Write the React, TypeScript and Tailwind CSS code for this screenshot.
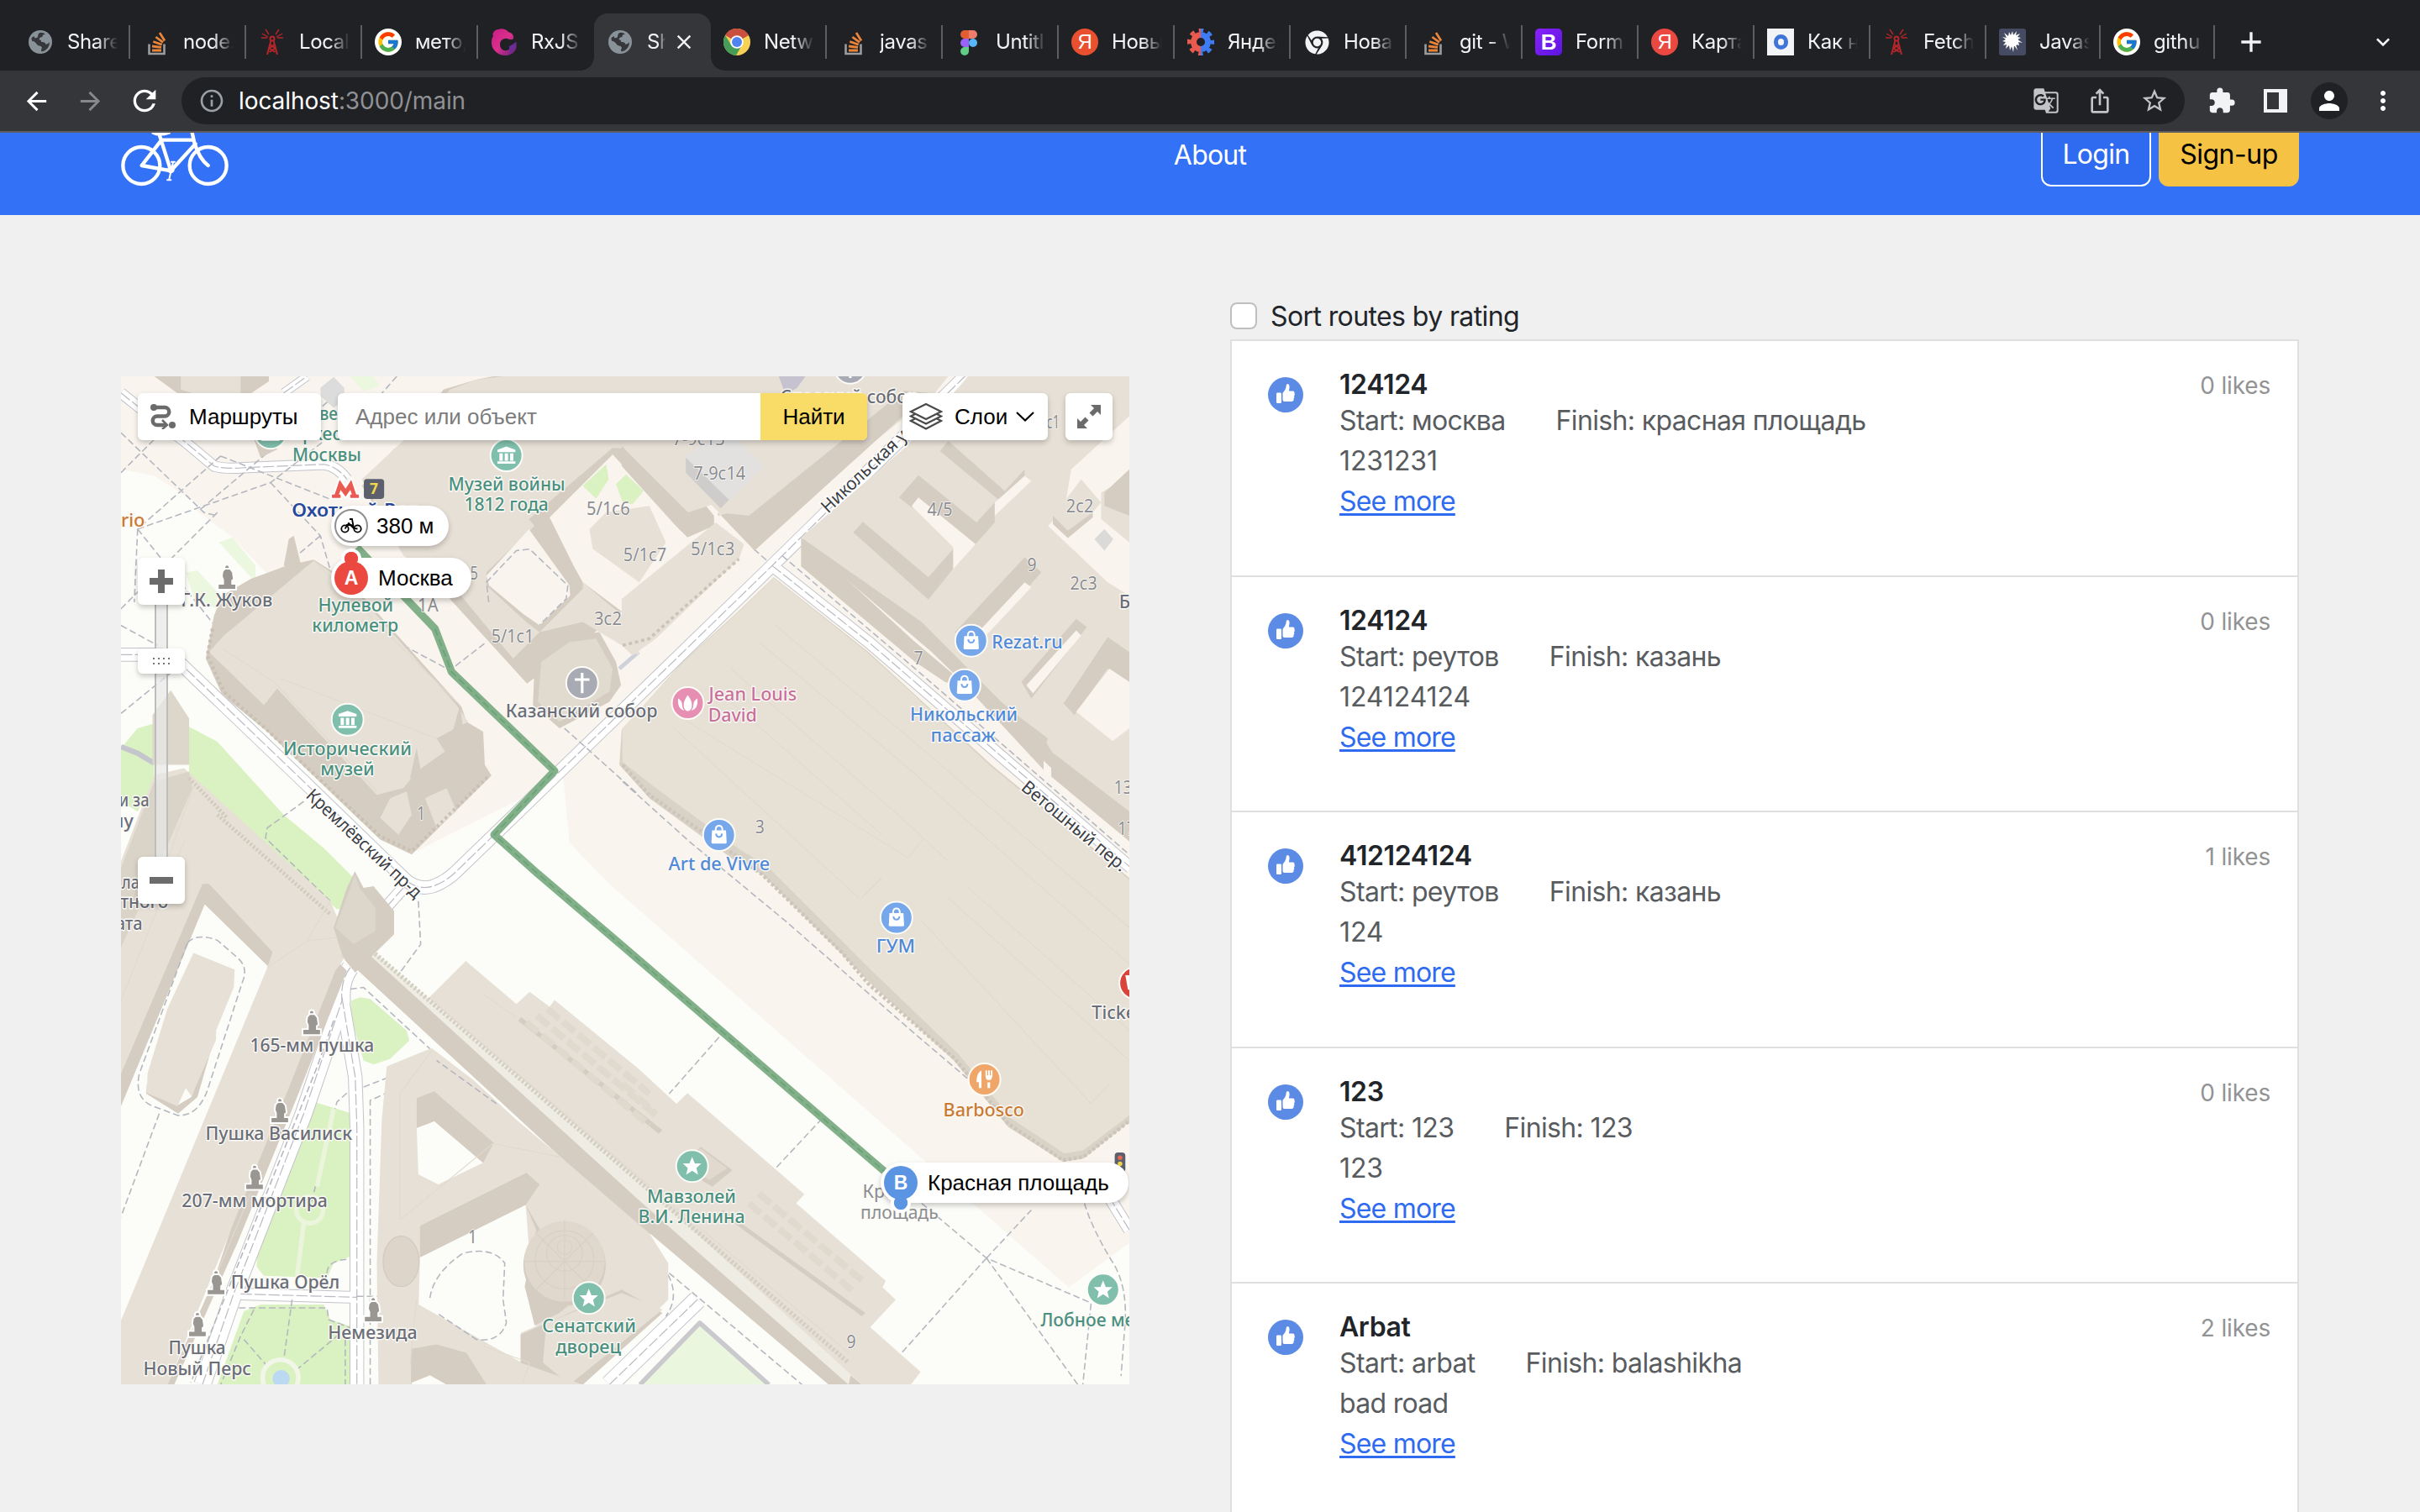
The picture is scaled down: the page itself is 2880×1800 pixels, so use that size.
import React from "react";
import {
  MdArrowBack, MdArrowForward, MdRefresh, MdInfoOutline, MdGTranslate, MdIosShare, MdStarBorder,
  MdExtension, MdPerson, MdMoreVert, MdClose, MdAdd, MdExpandMore,
} from "react-icons/md";
import { FaChrome } from "react-icons/fa";
import { FcGoogle } from "react-icons/fc";

/* ---------- favicons ---------- */

const Globe = () => (
  <svg viewBox="0 0 28 28" className="size-7">
    <circle cx="14" cy="14" r="14" fill="#8a9299" />
    <path
      d="M13 3Q17 2 20 4.500 16 5 16.500 8 13 8 12.500 11 16 12 15 14 20 13.500 20.500 17 24 16 25 14 25 23 16 25.500 14 24 16 21 15.500 18.500 11 18 9 15 6 13 3.500 14 3.500 9 8 5.500 7 9 9 10 11 8 10.500 5 13 3z"
      fill="#35373b"
    />
  </svg>
);

const Stack = () => (
  <svg viewBox="0 0 32 32" className="size-8">
    <path d="M7.500 18.500v11.500h18V18.500" fill="none" stroke="#9a9da0" strokeWidth="2.600" />
    <g stroke="#e8853b" strokeWidth="2.800">
      <path d="M11 26h11M11 21l11 1.400M12.300 15.500l10.400 3.600M15.400 10l8.600 6.400M20 5l6 9.600" />
    </g>
  </svg>
);

const Tower = () => (
  <svg viewBox="0 0 32 32" className="size-8" fill="none" stroke="#b3262a" strokeWidth="2">
    <circle cx="16" cy="12" r="2.500" />
    <path d="M14.500 14 10 31M17.500 14 22 31M13.500 19l6 4.500-7 4.500M18.500 19l-6 4.500 7 4.500" />
    <path d="M8 1l4 6M4 6l7 4M3 11h7M24 1l-4 6M28 6l-7 4M29 11h-7" strokeWidth="1.400" />
  </svg>
);

const GoogleMark = () => (
  <span className="flex size-8 items-center justify-center rounded-full bg-white">
    <FcGoogle className="size-[28px]" />
  </span>
);

const Rx = () => (
  <svg viewBox="0 0 32 32" className="size-8">
    <defs>
      <linearGradient id="rx" x1="0" y1="0" x2="1" y2="1">
        <stop offset="0" stopColor="#c81c86" />
        <stop offset=".5" stopColor="#dd2f8c" />
        <stop offset="1" stopColor="#57207f" />
      </linearGradient>
    </defs>
    <path
      d="M9 1C13-1 19 1 21 4c4 1 7 4 6 8-2 2-5 1-7 0-5-1-9 2-9 7 0 5 4 8 8 7 5-1 8-4 10-10 4 6 0 14-9 16C10 33 1 26 1 17c0-3 0-5 2-8-2-3 2-8 6-8z"
      fill="url(#rx)"
    />
    <path d="M22 21l9-5-2 8-7 5z" fill="#6a2c96" />
  </svg>
);

const ChromeColor = () => (
  <svg viewBox="0 0 32 32" className="size-8">
    <circle cx="16" cy="16" r="16" fill="#f7d154" />
    <path d="M16 16 2.100 8A16 16 0 0 1 29.900 8z" fill="#c9503f" />
    <path d="M2.100 8A16 16 0 0 0 15 32L22 19.500 9.500 20z" fill="#469d58" />
    <circle cx="16" cy="16" r="7.800" fill="#fff" />
    <circle cx="16" cy="16" r="6" fill="#4f83ee" />
  </svg>
);

const Figma = () => (
  <svg viewBox="0 0 32 32" className="size-8">
    <path d="M16 2h-5a5 5 0 0 0 0 10h5z" fill="#e35d33" />
    <path d="M16 2h5a5 5 0 0 1 0 10h-5z" fill="#ef7d6c" />
    <path d="M16 12h-5a5 5 0 0 0 0 10h5z" fill="#9a62f6" />
    <circle cx="21" cy="17" r="5" fill="#57b8f9" />
    <path d="M16 22h-5a5 5 0 1 0 5 5z" fill="#61cd86" />
  </svg>
);

const Ya = ({ tone }: { tone: string }) => (
  <span className={`flex size-8 items-center justify-center rounded-full font-['Liberation_Sans'] text-[24px] leading-none text-white ${tone}`}>
    Я
  </span>
);

const Gear = () => (
  <svg viewBox="0 0 32 32" className="size-8">
    <defs>
      <linearGradient id="gear" x1="0.2" y1="0" x2="0.8" y2="0">
        <stop offset=".45" stopColor="#ea5a4e" />
        <stop offset=".55" stopColor="#3f7cf4" />
      </linearGradient>
    </defs>
    <g fill="none" stroke="url(#gear)">
      <circle cx="16" cy="16" r="8.500" strokeWidth="7" />
      <circle cx="16" cy="16" r="14" strokeWidth="4.500" strokeDasharray="5.500 5.500" strokeDashoffset="2.750" />
    </g>
  </svg>
);

const BootstrapMark = () => (
  <span className="flex size-8 items-center justify-center rounded-[5px] bg-linear-135 from-[#8a1ffb] to-[#5a16e0] font-['Liberation_Sans'] text-[26px] font-bold leading-none text-white">
    B
  </span>
);

const BlueO = () => (
  <span className="flex size-8 items-center justify-center bg-[#f3f4f6]">
    <span className="h-[18px] w-[17px] rounded-full border-[5px] border-[#3f74d8]" />
  </span>
);

const Splat = () => (
  <svg viewBox="0 0 32 32" className="size-8">
    <rect width="32" height="32" rx="3" fill="#454b62" />
    <path
      d="M16 3l1 5 4-5-1 5 5-2-3 4 4 1-4 2 6 4-5-1 1 4-4-1 2 7-4-6-1 8-2-7-2 5-1-6-4 4 1-5-4 1 3-4-4-1 4-2-4-3 5 1-3-6 5 4 1-5 2 4z"
      fill="#fff"
    />
    <circle cx="16" cy="14.500" r="7" fill="#fff" />
  </svg>
);

const TABS: { icon: React.ReactNode; title: string; active?: boolean }[] = [
  { icon: <Globe />, title: "Share" },
  { icon: <Stack />, title: "node." },
  { icon: <Tower />, title: "Local" },
  { icon: <GoogleMark />, title: "мето," },
  { icon: <Rx />, title: "RxJS" },
  { icon: <Globe />, title: "Sh", active: true },
  { icon: <ChromeColor />, title: "Netw" },
  { icon: <Stack />, title: "javas" },
  { icon: <Figma />, title: "Untitl" },
  { icon: <Ya tone="bg-[#e9502f]" />, title: "Новы" },
  { icon: <Gear />, title: "Яндек" },
  { icon: <FaChrome className="size-[29px] text-[#f1f3f4]" />, title: "Нова" },
  { icon: <Stack />, title: "git - W" },
  { icon: <BootstrapMark />, title: "Form" },
  { icon: <Ya tone="bg-[#ea4841]" />, title: "Карта" },
  { icon: <BlueO />, title: "Как н" },
  { icon: <Tower />, title: "Fetch" },
  { icon: <Splat />, title: "Javas" },
  { icon: <GoogleMark />, title: "githu" },
];

function TabStrip() {
  return (
    <div className="flex h-[84px] bg-[#202124] pl-[17px] text-[24px] tracking-[-0.015em] text-[#f1f3f4]">
      {TABS.map((t, i) =>
        t.active ? (
          <div key={i} className="relative mt-4 flex h-[68px] w-[139px] items-center rounded-t-[16px] bg-[#35363a] pl-[15px]">
            <span className="absolute bottom-0 -left-4 size-4 bg-[radial-gradient(circle_at_0_0,#202124_15.5px,#35363a_16px)]" />
            <span className="absolute -right-4 bottom-0 size-4 bg-[radial-gradient(circle_at_100%_0,#202124_15.5px,#35363a_16px)]" />
            <span className="flex size-8 items-center justify-center">{t.icon}</span>
            <span className="ml-4 w-[22px] overflow-hidden whitespace-nowrap mask-r-from-60%">{t.title}</span>
            <MdClose className="ml-2 size-[28px]" />
          </div>
        ) : (
          <div key={i} className={`mt-4 flex h-[68px] items-center pl-[15px] ${i > 16 ? "w-[136px]" : "w-[138px]"}`}>
            <span className="flex size-8 shrink-0 items-center justify-center">{t.icon}</span>
            <span className="ml-4 w-[60px] overflow-hidden whitespace-nowrap mask-r-from-60%">{t.title}</span>
            <span className={i === 4 ? "hidden" : "ml-auto h-10 w-[2px] bg-[#5b5d61]"} />
          </div>
        ),
      )}
      <MdAdd className="mt-[30px] ml-[23px] size-[40px]" />
      <span className="mt-[34px] mr-[28px] ml-auto">
        <MdExpandMore className="size-[32px]" />
      </span>
    </div>
  );
}

function Toolbar() {
  return (
    <div className="flex h-[74px] items-center border-b-2 border-[#5d5d5f] bg-[#35363a] pl-[26px] text-white">
      <MdArrowBack className="size-[35px]" />
      <MdArrowForward className="ml-[29px] size-[35px] text-[#87888b]" />
      <MdRefresh className="ml-[27px] size-[40px]" />
      <div className="ml-[24px] flex h-14 w-[2384px] items-center rounded-full bg-[#202124] pr-[19px] pl-[20px]">
        <MdInfoOutline className="size-[32px] text-[#9aa0a6]" />
        <span className="ml-4 text-[28px] tracking-[-0.003em]">
          localhost<span className="text-[#8f9195]">:3000/main</span>
        </span>
        <span className="ml-auto flex items-center gap-[32px] text-[#c3c4c6]">
          <MdGTranslate className="size-[32px]" />
          <MdIosShare className="size-[32px]" />
          <MdStarBorder className="size-[34px]" />
        </span>
      </div>
      <MdExtension className="ml-[27px] size-[34px] text-[#f1f3f4]" />
      <span className="ml-[33px] h-7 w-7 border-y-[4px] border-r-[10px] border-l-[4px] border-[#f1f3f4]" />
      <span className="ml-[28px] flex size-11 items-center justify-center rounded-full bg-[#202124]">
        <MdPerson className="size-[36px]" />
      </span>
      <MdMoreVert className="ml-[24px] size-[36px]" />
    </div>
  );
}

/* ---------- site header ---------- */

const Bike = () => (
  <svg viewBox="0 -34 384 222" className="w-32" fill="none" stroke="#fff" strokeLinecap="round" strokeLinejoin="round">
    <g strokeWidth="13">
      <circle cx="73" cy="113" r="66" />
      <circle cx="311" cy="113" r="66" />
    </g>
    <path d="M74 113 178 132 266 36M74 113 143 24M178 132 137 3M144 22H258M250-22 262 32Q280 90 311 113" strokeWidth="13" />
    <path d="M112-2Q136 12 174-2L170-10H112zM250-22 220-32" fill="#fff" strokeWidth="5" />
    <circle cx="178" cy="128" r="13" fill="#fff" stroke="none" />
    <path d="M186 102 172 162M180 100H192M165 165H178" strokeWidth="6" />
  </svg>
);

function Header() {
  return (
    <header className="h-[98px] overflow-hidden bg-[#3371f6] px-[144px]">
      <div className="-mt-3 grid h-[76px] grid-cols-3 items-end text-[32px]">
        <Bike />
        <span className="mb-[13px] text-center leading-[48px] tracking-[-0.025em] text-white">About</span>
        <div className="flex justify-end gap-[9px] leading-[48px]">
          <button className="h-[76px] w-[131px] rounded-[12px] border-2 border-white bg-[#2f6bf0] pb-0 tracking-[-0.022em] text-white">Login</button>
          <button className="h-[76px] w-[167px] rounded-[12px] bg-[#f6c244] pb-0 tracking-[-0.015em] text-black">Sign-up</button>
        </div>
      </div>
    </header>
  );
}

/* ---------- map ---------- */

const ROOF = "#e7e0d6";
const WALL = "#d5ccc2";
const GRASS = "#daf1c1";
const PALE = "#fcfdf8";
const SAND = "#f9f4ed";

type Shape = [string, string];

const GROUND: Shape[] = [
  [PALE, "10,300 110,320 250,410 330,480 600,760 560,900 260,900 10,700"],
  [PALE, "10,700 280,700 280,900 500,1100 900,1450 1215,1290 1340,1215 1360,1425 1480,1548 2862,2763 3045,2630 3045,3060 10,3060"],
  [SAND, "230,420 340,500 600,770 470,560 420,450"],
  ["#ecf7e0", "305,520 345,505 415,590 415,640 360,580"],
  ["#ecf7e0", "205,610 240,605 300,670 300,720 230,690"],
  ["#ecf7e0", "700,20 770,20 790,50 740,65"],
  [GRASS, "10,1140 60,1080 110,1065 110,1240 60,1330 10,1300"],
  [GRASS, "215,1075 300,1120 500,1340 620,1440 710,1530 695,1620 660,1625 330,1330 215,1230"],
  [GRASS, "1400,350 1420,320 1470,280 1478,330 1450,375 1420,390"],
  [GRASS, "2100,20 2140,20 2130,24"],
  [GRASS, "730,1890 760,1895 870,1990 878,2020 820,2075 770,2092 740,2080 700,1940 703,1900"],
  [GRASS, "595,2206 700,2238 700,2670 650,2690 630,2735 440,2728 418,2700 420,2665"],
  [GRASS, "380,2835 430,2815 620,2815 640,2860 700,2880 700,3056 300,3056"],
  ["#ebf6df", "1752,2875 1572,3056 1960,3056"],
];

const BUILDINGS: Shape[] = [
  // north-west corner
  [WALL, "110,20 455,20 455,35 365,95 200,85"],
  [ROOF, "190,20 370,20 370,70 300,95 190,60"],
  ["#dcdcdc", "610,55 650,22 682,55 682,90 650,115 612,80"],
  [WALL, "400,180 500,180 480,240 430,265"],
  // war museum and the quarter east of it
  [WALL, "735,350 830,240 890,200 980,60 1080,30 1130,20 1600,20 1600,560 1568,690 1232,945 1000,690 1000,560 870,560"],
  [ROOF, "735,330 885,190 1000,60 1080,30 1160,20 1560,20 1560,240 1490,235 1238,450 1000,650 860,560"],
  [ROOF, "1000,640 1238,450 1255,470 1110,610 1110,650 1230,760 1270,790 1190,870"],
  [ROOF, "1400,640 1470,700 1568,780 1568,860 1400,760 1270,790 1400,660"],
  [SAND, "1110,620 1238,480 1360,650 1362,680 1270,770 1220,735 1118,650"],
  [SAND, "1300,445 1490,255 1568,340 1660,450 1760,560 1560,760 1400,640 1372,590"],
  [ROOF, "1420,480 1470,430 1600,410 1650,520 1570,640 1430,540"],
  [GRASS, "1400,350 1470,285 1478,330 1440,388"],
  [GRASS, "1500,345 1530,315 1583,365 1550,405 1520,400"],
  [WALL, "1517,150 1590,190 1795,440 1795,470 1715,505 1680,470 1517,290"],
  [ROOF, "1517,60 1620,150 1760,290 1793,405 1717,430 1517,230"],
  [ROOF, "1540,20 2500,20 2460,70 1900,520 1780,400 1620,220"],
  [WALL, "1807,440 1880,420 2330,60 2440,70 1917,545 1807,430"],
  [ROOF, "1807,430 1900,440 2420,20 2200,20 1860,380"],
  ["#e2e1e0", "1710,260 1790,200 1860,205 1945,290 1840,395 1710,265"],
  ["#cfcdcc", "1710,265 1840,392 1815,418 1710,310"],
  ["#c6c2cf", "1990,20 2070,20 2045,55 2010,75"],
  // between Nikolskaya street and GUM
  [ROOF, "1517,690 1800,460 1885,525 1870,570 1620,810 1550,860 1517,830"],
  // Kazan cathedral
  [WALL, "1255,880 1290,820 1310,870 1360,800 1450,790 1500,880 1515,950 1480,1000 1330,1080 1250,1010"],
  ["#e1dace", "1275,880 1360,820 1440,810 1490,900 1480,970 1330,1060 1265,1000"],
  // historical museum
  [WALL, "265,870 290,740 315,680 400,630 510,590 590,572 700,640 860,820 1035,1015 1050,1060 1100,1090 1105,1190 1125,1222 885,1460 790,1415 450,1090 315,980"],
  [ROOF, "275,850 320,800 590,575 700,650 1020,1010 1055,1060 960,1110 985,1150 900,1210 860,1260 780,1280 480,960 440,1010"],
  [ROOF, "820,1290 870,1270 885,1340 845,1400 790,1350"],
  [ROOF, "925,1290 990,1260 1020,1330 960,1380"],
  [WALL, "500,590 515,510 530,500 550,580 540,600"],
  [WALL, "880,1230 900,1140 918,1240"],
  [WALL, "1000,1120 1030,1010 1045,1120"],
  // arsenal and corner tower
  [ROOF, "10,1480 110,1220 200,1200 640,1600 700,1740 670,1790 150,3056 10,3056"],
  ["#dad3c8", "10,1500 110,1240 215,1210 225,1260 120,1500 10,1740"],
  ["#ddd6cb", "105,1040 160,965 215,1050 215,1190 105,1190"],
  [WALL, "10,2120 10,2220 262,1610 452,1796 466,1753 275,1548 255,1548"],
  [PALE, "262,1610 452,1796 10,2863 10,2218"],
  [WALL, "670,1790 655,1810 520,2150 340,2590 290,2740 150,3056 170,3056 360,2630 540,2190 690,1810"],
  [WALL, "88,2150 180,2215 222,2190 298,1990 240,2190 182,2240 86,2180"],
  [ROOF, "228,1756 352,1806 350,1858 296,1990 296,2018 222,2188 205,2163 180,2218 88,2178 90,2118 133,1978 150,1923"],
  // kremlin wall and Nikolskaya tower
  [WALL, "670,1760 715,1815 760,1755 1568,2475 2240,3056 2140,3056 1607,2605 1560,2580"],
  ["#efece3", "745,1730 1568,2440 2210,3010 2200,3056 1568,2500 750,1755"],
  [WALL, "650,1680 690,1560 714,1510 740,1560 770,1555 832,1630 832,1700 715,1815 675,1760"],
  ["#ddd6cb", "655,1680 700,1560 714,1520 728,1560 776,1620 776,1690 710,1730"],
  // mausoleum and tribunes
  [ROOF, "935,1893 1048,1780 1200,1910 1240,1873 1300,1918 1315,1898 1568,2105 1682,2210 1715,2178 2067,2483 2042,2510 2312,2743 2302,2763 2342,2800 2265,2883 2417,3018 2387,3056 2240,3056 1568,2440"],
  [WALL, "1205,1960 1215,1950 1640,2290 1628,2300"],
  [WALL, "1690,2400 1755,2340 1850,2410 1790,2460"],
  ["#e1d9ce", "1700,2390 1755,2345 1835,2405 1780,2440"],
  [WALL, "1812,2538 1822,2530 2250,2840 2240,2850"],
  // senate palace
  [ROOF, "810,2098 945,2043 1070,2138 1200,2258 1330,2368 1600,2600 1657,2690 1657,2800 1400,3056 785,3056 780,2690 795,2258"],
  [PALE, "900,2283 953,2263 1100,2388 965,2453 905,2423"],
  [WALL, "900,2193 953,2173 1132,2328 1100,2388 953,2263 900,2283"],
  [WALL, "910,2578 1230,2418 1270,2453 1228,2515 910,2673"],
  [PALE, "910,2673 1228,2515 1250,2800 1260,2880 1213,2900 1213,2988 906,2815"],
  [WALL, "1228,2515 1260,2590 1225,2760 1255,2878 1330,2840 1400,2780 1330,2690"],
  [WALL, "1213,2905 1517,2770 1640,2840 1400,3056 1213,2990"],
  [ROOF, "1290,2870 1517,2780 1640,2830 1360,3056 1280,2990"],
  [WALL, "883,2948 960,2935 1050,2960 1110,3056 883,3056"],
  [PALE, "885,3050 940,3028 990,3056 885,3056"],
  // GUM
  ["#d9d2c6", "1517,1085 1700,880 1860,735 1975,625 2260,850 2380,960 2630,1190 3045,1530 3045,2265 2907,2375 2845,2385 2680,2280 2517,2080 2257,1840 2180,1760 1940,1520 1860,1480 1600,1290 1510,1190"],
  ["#e7e0d5", "1519,1080 1703,880 1862,736 1975,627 2255,850 2378,962 2628,1194 3045,1536 3045,2245 2907,2350 2850,2360 2690,2255 2530,2060 2270,1810 2190,1730 1950,1490 1880,1450 1620,1260 1519,1180"],
  // quarter east of Vetoshny lane
  [WALL, "2057,515 2450,850 2800,1190 3045,1420 3045,20 2650,20"],
  [ROOF, "2057,505 2370,235 2560,20 3045,20 3045,1370 2830,1180 2787,1110 2660,1000 2420,760"],
  [WALL, "2057,505 2057,592 2400,880 2490,940 2560,960 2787,1205 2787,1110 2590,980 2400,820"],
  [WALL, "2214,490 2243,458 2440,625 2515,540 2515,600 2440,692"],
  [WALL, "2352,385 2410,318 2585,460 2640,400 2640,460 2582,525 2410,385 2390,415"],
  [WALL, "2475,245 2500,215 2670,365 2730,300 2730,345 2668,405"],
  [SAND, "2390,410 2410,385 2582,525 2435,690 2515,600 2515,535"],
  [SAND, "2730,320 2750,335 2640,440 2640,400"],
  [SAND, "2870,300 3045,140 3045,320 2960,370 2960,450 3045,520 3045,680 2980,640 2800,470 2850,420"],
  [ROOF, "2815,440 2870,370 2900,330 2960,400 2900,470 2860,495"],
  [WALL, "2815,440 2860,485 2935,430 2935,445 2860,507 2815,465"],
  ["#dcdad8", "2940,510 2970,480 2997,510 2970,545"],
  [WALL, "2970,370 3045,300 3045,440 2970,410"],
  [WALL, "2520,790 2730,565 2780,610 2570,850"],
  [SAND, "2590,790 2730,640 2750,655 2600,815"],
  [WALL, "2720,940 2885,750 2917,775 2750,990"],
  [SAND, "2735,950 2885,785 2900,800 2755,975"],
  [WALL, "2847,1005 2980,805 3045,850 3045,1050 2980,900 2880,1040"],
  [SAND, "2885,1030 2985,900 3045,940 3045,1080 2995,1118"],
  [WALL, "2585,980 2600,960 2800,1110 2787,1150"],
  [WALL, "2810,1150 3045,1330 3045,1420 2810,1225"],
];

/* double-kerbed roads: kerb colour under a white core */
const ROADS: [string, number][] = [
  ["M10 858H130Q180 870 210 905L560 1240 860 1530Q900 1570 950 1555 990 1540 1020 1510L1568 980 1970 590 2550 20", 34],
  ["M860 1560 780 1650", 30],
  ["M1970 590 2260 820 3050 1500", 30],
  ["M10 70 60 110 200 215 290 290Q320 300 380 295L620 285Q660 290 690 330", 26],
  ["M500 70 570 20", 20],
  ["M700 1800Q670 1840 675 1900L560 2240 420 2600 350 2780 255 3056", 46],
  ["M675 1890Q700 2040 715 2130L720 2280V3056", 36],
  ["M370 2783 720 2793", 30],
  ["M1745 2800 1480 3056", 50],
  ["M3045 2590 2990 2500", 30],
];

const PATHS =
  "M10 190 260 430 300 440M10 310 200 120M60 480 460 340 640 200M60 480 50 700M60 480 300 780M10 720 300 430M310 260 60 480M310 260 640 390M460 340 610 500 645 620M610 500 480 610M250 420 640 90M10 770 120 830M10 1035 200 880M840 20 700 180M860 830 1000 905 1110 820M1345 1080 1568 1280M1520 1240 1720 1420 2010 1660 2400 2000 2800 2340M560 1300 450 1380 445 1410 640 1600M905 1600 912 1730 850 1815M1117 700 1110 640 1200 545 1240 540 1355 650 1350 690 1270 768M2000 560 2400 900 3045 1460M1915 540 1960 580M700 1865 740 1860 940 2045M1810 2010 1660 2180M2120 2255 1980 2405 1770 2640M2420 2510 2615 2675 2930 2810 2905 3056M2615 2675 2750 2530M2615 2675 2890 3056M2615 2675 2360 2960M2910 2510Q2930 2580 2990 2680 3045 2760 3030 2900L3020 3030M210 1725Q240 1695 300 1718L360 1770Q395 1800 375 1845L270 2170Q240 2250 180 2245L100 2215Q50 2190 65 2120L210 1725M125 2240 10 2550M650 1960 600 2100 400 2600 220 3050M690 2178 660 2205 650 2240 580 2520M560 2570 540 2730M760 3056V2200L960 2110 1200 2310M740 2160 945 2080 1340 2400M940 2795Q950 2720 1040 2660 1130 2640 1165 2690 1170 2740 1160 2800L1170 2870Q1150 2930 1080 2920L960 2840M720 2790H940M365 2825H630L635 2860 700 2885M410 2830 370 2910 310 3056M525 2800 500 2980M380 2920 450 3000M690 2885 540 3010M685 2890V3056M630 2720Q630 2680 700 2678M1660 2720 2060 3056M1640 2700Q1700 2780 1650 2850";

const LABEL_TONES = {
  gray: "fill-[#6a6e78]",
  num: "fill-[#8b8d92]",
  green: "fill-[#4a907f]",
  blue: "fill-[#5089d8]",
  pink: "fill-[#c8709a]",
  orange: "fill-[#cb7a33]",
  navy: "fill-[#27489b]",
};
type Tone = keyof typeof LABEL_TONES;

/* text, left, right, baseline, tone */
const LABELS: [string, number, number, number, Tone][] = [
  ["ве", 608, 662, 152, "green"],
  ["археологии", 526, 835, 213, "green"],
  ["Москвы", 526, 733, 275, "green"],
  ["Музей войны", 995, 1347, 363, "green"],
  ["1812 года", 1043, 1297, 425, "green"],
  ["5/1с6", 1411, 1542, 437, "num"],
  ["5/1с7", 1522, 1652, 576, "num"],
  ["5/1с3", 1725, 1857, 560, "num"],
  ["7-9с14", 1733, 1890, 330, "num"],
  ["7-9с13", 1670, 1828, 228, "num"],
  ["Охотный Ряд", 524, 908, 443, "navy"],
  ["ario", -22, 82, 473, "orange"],
  ["Г.К. Жуков", 190, 466, 712, "gray"],
  ["Нулевой", 603, 830, 727, "green"],
  ["километр", 585, 845, 790, "green"],
  ["1А", 903, 965, 728, "num"],
  ["5", 1061, 1085, 632, "num"],
  ["5/1с1", 1125, 1253, 822, "num"],
  ["3с2", 1434, 1517, 768, "num"],
  ["Казанский собор", 1168, 1625, 1047, "gray"],
  ["Исторический", 498, 885, 1160, "green"],
  ["музей", 610, 773, 1222, "green"],
  ["1", 900, 926, 1355, "num"],
  ["и за", 4, 95, 1315, "gray"],
  ["му", -24, 47, 1378, "gray"],
  ["ла", 12, 66, 1563, "gray"],
  ["тного", 8, 152, 1622, "gray"],
  ["ата", -6, 75, 1686, "gray"],
  ["165-мм пушка", 398, 772, 2053, "gray"],
  ["Пушка Василиск", 264, 706, 2319, "gray"],
  ["207-мм мортира", 193, 632, 2521, "gray"],
  ["Пушка Орёл", 341, 668, 2767, "gray"],
  ["Немезида", 633, 902, 2919, "gray"],
  ["Пушка", 153, 325, 2963, "gray"],
  ["Новый Перс", 77, 402, 3027, "gray"],
  ["1", 1055, 1081, 2631, "num"],
  ["Сенатский", 1278, 1560, 2898, "green"],
  ["дворец", 1318, 1515, 2961, "green"],
  ["Спасский собор", 1994, 2410, 100, "gray"],
  ["с1", 2796, 2835, 178, "num"],
  ["4/5", 2437, 2513, 440, "num"],
  ["2с2", 2855, 2937, 430, "num"],
  ["9", 2738, 2766, 608, "num"],
  ["2с3", 2867, 2948, 662, "num"],
  ["Б", 3014, 3048, 717, "gray"],
  ["7", 2396, 2424, 888, "num"],
  ["13", 2998, 3054, 1277, "num"],
  ["17", 3010, 3064, 1400, "num"],
  ["3", 1919, 1947, 1396, "num"],
  ["Rezat.ru", 2631, 2844, 840, "blue"],
  ["Никольский", 2385, 2709, 1058, "blue"],
  ["пассаж", 2447, 2643, 1120, "blue"],
  ["Jean Louis", 1779, 2044, 997, "pink"],
  ["David", 1777, 1924, 1060, "pink"],
  ["Art de Vivre", 1658, 1963, 1508, "blue"],
  ["ГУМ", 2283, 2400, 1756, "blue"],
  ["Ticketland", 2932, 3200, 1955, "gray"],
  ["Barbosco", 2485, 2729, 2247, "orange"],
  ["Мавзолей", 1593, 1861, 2508, "green"],
  ["В.И. Ленина", 1567, 1888, 2570, "green"],
  ["Красная", 2242, 2462, 2493, "num"],
  ["площадь", 2236, 2470, 2558, "num"],
  ["9", 2194, 2222, 2947, "num"],
  ["Лобное место", 2778, 3145, 2880, "green"],
];

const MapLabel = ({ l: [text, x1, x2, y, tone] }: { l: [string, number, number, number, Tone] }) => (
  <text
    x={x1}
    y={y}
    textLength={x2 - x1}
    lengthAdjust="spacingAndGlyphs"
    stroke="#fbf9f5"
    strokeWidth={tone === "num" ? "4" : "7"}
    strokeLinejoin="round"
    className={`[paint-order:stroke] ${tone === "num" ? "text-[53px] font-normal" : tone === "navy" ? "text-[56px] font-semibold" : "text-[56px] font-medium"} ${LABEL_TONES[tone]}`}
  >
    {text}
  </text>
);

const Poi = ({ x, y, fill, children }: { x: number; y: number; fill: string; children?: React.ReactNode }) => (
  <g transform={`translate(${x} ${y})`}>
    <circle r="48" fill={fill} stroke="#fdfcf8" strokeWidth="5" />
    <g fill="#fff">{children}</g>
  </g>
);

const Museum = ({ x, y }: { x: number; y: number }) => (
  <Poi x={x} y={y} fill="#7fbfac">
    <path d="M0-27 27-17V-10H-27V-17zM-21-6h10v22h-10zM-5-6H5v22H-5zM11-6h10v22H11zM-27 18H27v7H-27z" />
  </Poi>
);
const Star = ({ x, y }: { x: number; y: number }) => (
  <Poi x={x} y={y} fill="#7fbfac">
    <path d="M0-28 8-8 28-8 13 6 18 26 0 14-18 26-13 6-28-8-8-8z" />
  </Poi>
);
const Bag = ({ x, y }: { x: number; y: number }) => (
  <Poi x={x} y={y} fill="#75a7ea">
    <path d="M-21-14H21L23 22Q23 26 19 26H-19Q-23 26-23 22z" />
    <path d="M-10-12v-6Q-9-28 0-28T10-18v6" fill="none" stroke="#fff" strokeWidth="5" />
    <path d="M-9-4Q-8 6 0 6T9-4" fill="none" stroke="#75a7ea" strokeWidth="5" />
  </Poi>
);
const Monument = ({ x, y }: { x: number; y: number }) => (
  <g transform={`translate(${x} ${y})`} fill="#9a9691" stroke="#fff" strokeWidth="10" className="[paint-order:stroke]">
    <circle cx="0" cy="-65" r="5" />
    <path d="M-25 0V-13H-9V-28L-13-38-11-52-5-58H8L15-50 18-30 13-26V-13H25V0z" />
  </g>
);

function MapArt() {
  return (
    <svg viewBox="10 20 3035 3035" className="size-[1200px] font-['Noto_Sans']">
      <rect x="10" y="20" width="3035" height="3035" fill={SAND} />
      {GROUND.map(([fill, pts], i) => <polygon key={i} points={pts} fill={fill} />)}
      <g fill="none" strokeLinejoin="round">
        {ROADS.map(([d, w], i) => <path key={i} d={d} stroke="#c3c4ca" strokeWidth={w + 8} />)}
        {ROADS.map(([d, w], i) => <path key={i} d={d} stroke="#fff" strokeWidth={w + 3} />)}
        {ROADS.map(([d], i) => <path key={i} d={d} stroke="#b9bac2" strokeWidth="3" strokeDasharray="34 8" />)}
        <path d={PATHS} stroke="#b4b7bf" strokeWidth="4" strokeDasharray="20 10" />
        <path d="M10 1135 60 1155 110 1185" stroke="#c5c6cd" strokeWidth="16" />
        <path d="M1572 3056 1752 2870 1960 3056" stroke="#c9c9ce" strokeWidth="14" />
        <path d="M2860 340 2890 390 3045 530" stroke="#ced0da" strokeWidth="12" />
        <path d="M1510 900 1568 850" stroke="#ced0da" strokeWidth="12" />
      </g>
      <g stroke="#ebf5dc" strokeWidth="14" fill="none">
        <path d="M650 2225 600 2460M560 2570 540 2730" />
        <circle cx="578" cy="2530" r="40" />
      </g>
      <circle cx="490" cy="3035" r="54" fill="#daf1c1" stroke="#f1f6e8" strokeWidth="14" />
      <circle cx="492" cy="3038" r="26" fill="#bcd9f2" />
      {BUILDINGS.map(([fill, pts], i) => <polygon key={i} points={pts} fill={fill} />)}

      <g fill="none">
        <path d="M1140 2210 960 2080M1117 700 1110 640 1200 545 1240 540 1355 650 1350 690 1270 768M940 2795Q950 2720 1040 2660 1130 2640 1165 2690L1160 2800 1170 2870Q1150 2930 1080 2920L960 2840M210 1725Q240 1695 300 1718L360 1770Q395 1800 375 1845L270 2170Q240 2250 180 2245L100 2215Q50 2190 65 2120L210 1725M125 2240 10 2550" stroke="#b4b7bf" strokeWidth="4" strokeDasharray="20 10" />
        <path d="M745 1733 1568 2443 2200 2990" stroke="#d3cfc2" strokeWidth="14" strokeDasharray="7 6" />
        <path d="M300 1340 640 1640M215 1230 330 1350" stroke="#d0cbbd" strokeWidth="12" strokeDasharray="6 6" />
        <path d="M1520 1190 1600 1280 1870 1470 1940 1520 2180 1755 2260 1850 2520 2075 2680 2270 2845 2380 2907 2370 3045 2262" stroke="#cdc5b9" strokeWidth="11" strokeDasharray="9 7" />
        <path d="M285 780 270 860 320 970 450 1085 790 1405 885 1450 1115 1225" stroke="#c9c0b4" strokeWidth="10" strokeDasharray="8 9" />
        <path d="M1520 830 1600 810 1700 720 1870 570" stroke="#cbc3b7" strokeWidth="9" strokeDasharray="10 9" />
        <g stroke="#e1dacf" strokeWidth="3">
          <path d="M1930 820 2380 1200 2760 1540 3045 1790M1980 770 2420 1140 3045 1680M1845 900 2360 1350 2500 1480M1670 1075 2230 1590M1700 1050 2380 1470 2425 1410M2500 1590 3045 2080M2420 1660 2930 2210 2985 2150M2560 1560 3045 1990M2240 1590 2300 1530M1800 960 2300 1400" />
          <path d="M315 840 470 940 780 1270M490 930 960 1110M590 575 1030 1010M850 2560 1130 2330 1330 2370M850 2560 850 2180 945 2050M970 1920 1568 2430 2200 2960M1100 1880 1200 1950M900 2800 880 3000M1100 2940 1240 2990 1220 3050" />
          <path d="M570 1720 450 1800M570 1720 640 1600M570 1720 660 1710M10 1900 200 1420M400 2480 300 2720M120 1560 230 1250" />
        </g>
        <g stroke="#e0d9ce">
          <path d="M1230 1965 1600 2275M1262 1945 1620 2245M1294 1925 1600 2180" strokeDasharray="46 14" strokeWidth="20" />
          <path d="M1900 2510 2220 2780M1930 2480 2250 2750M1520 2150 1620 2240" strokeDasharray="46 14" strokeWidth="20" />
        </g>
      </g>
      <circle cx="1345" cy="2695" r="124" fill={WALL} />
      <circle cx="1345" cy="2685" r="121" fill="#e0d8cd" />
      <g fill="none" stroke="#d8d0c5" strokeWidth="3">
        <circle cx="1345" cy="2680" r="88" />
        <circle cx="1345" cy="2660" r="54" />
        <circle cx="1345" cy="2642" r="22" />
        <path d="M1345 2560V2800M1225 2685H1465M1260 2600 1430 2770M1430 2600 1260 2770" />
      </g>
      <ellipse cx="853" cy="2685" rx="54" ry="76" fill="#ddd5ca" stroke="#d3cabf" strokeWidth="3" />

      {/* cycling route */}
      <g fill="none" strokeLinejoin="round">
        <path d="M720 535 955 780 1005 910 1315 1208 1133 1400 1265 1518 1517 1733 2307 2413" stroke="#82b189" strokeWidth="23" />
        <path d="M955 780 1005 910 1315 1208 1133 1400 1265 1518 1517 1733 2307 2413" stroke="#6b9f78" strokeWidth="4" strokeDasharray="22 12" />
      </g>

      {LABELS.map((l, i) => <MapLabel key={i} l={l} />)}
      <g className="fill-[#3d3f44] text-[54px] [paint-order:stroke]" stroke="#fff" strokeWidth="8">
        <text transform="translate(564 1286) rotate(43)" textLength="452" lengthAdjust="spacingAndGlyphs">Кремлёвский пр-д</text>
        <text transform="translate(2138 434) rotate(-43.5)" textLength="376" lengthAdjust="spacingAndGlyphs">Никольская ул.</text>
        <text transform="translate(2716 1263) rotate(39.5)" textLength="394" lengthAdjust="spacingAndGlyphs">Ветошный пер.</text>
      </g>

      <Museum x={1170} y={258} />
      <Museum x={692} y={1054} />
      <Museum x={460} y={190} />
      <Star x={1418} y={2795} />
      <Star x={1729} y={2398} />
      <Star x={2966} y={2770} />
      <Bag x={2569} y={816} />
      <Bag x={2549} y={950} />
      <Bag x={1810} y={1401} />
      <Bag x={2344} y={1650} />
      <Poi x={1716} y={1004} fill="#e68fb2">
        <path d="M0-24Q15-5 12 12 8 24 0 24T-12 12Q-15-5 0-24zM-29-14Q-17-8-17 6-17 16-10 22-32 18-29-14zM29-14Q17-8 17 6 17 16 10 22 32 18 29-14z" />
      </Poi>
      <Poi x={1398} y={943} fill="#a8abb3">
        <path d="M-4-30H4V-14H22V-6H4V31H-4V-6H-22V-14H-4z" />
      </Poi>
      <Poi x={2205} y={-6} fill="#a8abb3">
        <path d="M-4-20H4V31H-4z" />
      </Poi>
      <Poi x={2609} y={2137} fill="#f0a668">
        <path d="M-9-27V26H-17V8H-24Q-24-20-9-27zM3-27H8V-12H11V-27H16V-12H19V-27H24V-10Q22 0 17 2H10Q4 0 3-10zM9 9H17V26H9z" />
      </Poi>
      <Poi x={3063} y={1847} fill="#d9453b">
        <path d="M-30-24H-18L-10 20H-22z" />
      </Poi>

      <Monument x={329} y={660} />
      <Monument x={584} y={2001} />
      <Monument x={488} y={2266} />
      <Monument x={412} y={2467} />
      <Monument x={296} y={2784} />
      <Monument x={240} y={2910} />
      <Monument x={769} y={2865} />

      {/* metro */}
      <path d="M645 386V376H653L668 332 686 358 703 332 718 376H726V386H700V376H705L700 362 686 382 671 362 666 376H671V386z" fill="#ea5a51" stroke="#fff" strokeWidth="10" className="[paint-order:stroke]" />
      <rect x="741" y="329" width="61" height="60" rx="9" fill="#5c606c" />
      <text x="771" y="374" textAnchor="middle" className="fill-[#f4d84a] text-[44px] font-bold">7</text>
      <rect x="3001" y="2357" width="32" height="60" rx="10" fill="#5c606c" />
      <circle cx="3017" cy="2373" r="7" fill="#e8694f" />
      <circle cx="3017" cy="2391" r="7" fill="#f0d54a" />
    </svg>
  );
}

const panel = "absolute flex items-center bg-white shadow-[0_3px_6px_rgba(0,0,0,0.22)]";

function MapControls() {
  return (
    <div className="font-['Liberation_Sans'] text-[26px] text-black">
      <div className={`${panel} top-[20px] left-[20px] h-14 w-[218px] rounded-[6px] pl-[15px]`}>
        <svg viewBox="0 0 30 30" className="size-[30px]" fill="none" stroke="#6b6b6b" strokeWidth="4.500">
          <path d="M4 4H17A5 5 0 0 1 17 14.500H8A5 5 0 0 0 8 25H18" />
          <path d="M14 19l6 6-6 5" strokeWidth="2.500" />
          <circle cx="4" cy="4" r="4" fill="#6b6b6b" stroke="none" />
          <circle cx="26" cy="25" r="4" fill="#6b6b6b" stroke="none" />
        </svg>
        <span className="ml-[16px]">Маршруты</span>
      </div>
      <div className={`${panel} top-[20px] left-[258px] h-14 w-[630px] rounded-[6px] pl-[21px] text-[#7c7c7c]`}>
        Адрес или объект
        <span className="ml-auto flex h-full w-[127px] items-center justify-center rounded-r-[6px] bg-[#f9db67] text-black">Найти</span>
      </div>
      <div className={`${panel} top-[20px] left-[930px] h-14 w-[173px] rounded-[6px] pl-[8px]`}>
        <svg viewBox="0 0 40 34" className="h-[34px] w-10" fill="none" stroke="#4a4a4a" strokeWidth="2.200">
          <path d="M2 11 20 2 38 11 20 20z" />
          <path d="M7 14 2 16.500 20 25.500 38 16.500 33 14M7 19.500 2 22 20 31.500 38 22 33 19.500" />
        </svg>
        <span className="ml-[14px]">Слои</span>
        <svg viewBox="0 0 22 12" className="ml-[10px] h-3 w-[22px]" fill="none" stroke="#000" strokeWidth="2.200">
          <path d="M1 1 11 10.500 21 1" />
        </svg>
      </div>
      <div className={`${panel} top-[20px] left-[1124px] size-14 justify-center rounded-[6px]`}>
        <svg viewBox="0 0 28 28" className="size-7" fill="#6b6b6b">
          <path d="M16 0H28V12L24 8 18.500 13.500 14.500 9.500 20 4zM12 28H0V16L4 20 9.500 14.500 13.500 18.500 8 24z" />
        </svg>
      </div>

      <div className="absolute top-[272px] left-[40px] h-[300px] w-4 border-x-2 border-[#bdbdbd] bg-[#e8e8e8]/70" />
      <div className={`${panel} top-[216px] left-[20px] size-14 justify-center rounded-[6px]`}>
        <svg viewBox="0 0 28 28" className="size-7" fill="#6b6b6b">
          <path d="M10 0h8v10h10v8H18v10h-8V18H0v-8h10z" />
        </svg>
      </div>
      <div className={`${panel} top-[324px] left-[20px] h-[30px] w-14 justify-center rounded-[6px]`}>
        <span className="grid grid-cols-4 gap-x-[4px] gap-y-[4px]">
          {Array.from({ length: 8 }, (_, i) => <span key={i} className="size-[2px] bg-[#777]" />)}
        </span>
      </div>
      <div className={`${panel} top-[572px] left-[20px] size-14 justify-center rounded-[6px]`}>
        <span className="h-2 w-7 bg-[#6b6b6b]" />
      </div>

      <div className={`${panel} top-[154px] left-[250px] h-12 w-[140px] rounded-full pl-1`}>
        <span className="flex size-10 items-center justify-center rounded-full border-2 border-[#8f8f8f]">
          <svg viewBox="0 0 26 18" className="h-[18px] w-[26px]" fill="none" stroke="#000" strokeWidth="1.800">
            <circle cx="5.500" cy="12.500" r="4.200" />
            <circle cx="20.500" cy="12.500" r="4.200" />
            <path d="M5.500 12.500 10 6 16 12 20.500 12.500M7 8H13L16 12 14 1H11" />
          </svg>
        </span>
        <span className="ml-[10px]">380 м</span>
      </div>
      <div className={`${panel} top-[216px] left-[250px] h-12 w-[167px] rounded-full pl-1`}>
        <span className="absolute -top-[7px] left-[16px] size-4 rounded-full bg-[#eb4840] ring-4 ring-white" />
        <span className="relative flex size-10 items-center justify-center rounded-full bg-[#eb4840] text-[23px] font-bold text-white">
          <span className="absolute -top-[11px] left-[12px] size-4 rounded-full bg-[#eb4840]" />
          <span className="relative">A</span>
        </span>
        <span className="ml-[12px]">Москва</span>
      </div>
      <div className={`${panel} top-[936px] left-[904px] h-12 w-[295px] rounded-full pl-1`}>
        <span className="absolute -bottom-[8px] left-[16px] size-4 rounded-full bg-[#5b94e3] ring-4 ring-white" />
        <span className="relative flex size-10 items-center justify-center rounded-full bg-[#5b94e3] text-[23px] font-bold text-white">
          <span className="absolute -bottom-[12px] left-[12px] size-4 rounded-full bg-[#5b94e3]" />
          <span className="relative">B</span>
        </span>
        <span className="ml-[12px]">Красная площадь</span>
      </div>
    </div>
  );
}

/* ---------- routes list ---------- */

const ROUTES = [
  { title: "124124", start: "москва", finish: "красная площадь", note: "1231231", likes: 0 },
  { title: "124124", start: "реутов", finish: "казань", note: "124124124", likes: 0 },
  { title: "412124124", start: "реутов", finish: "казань", note: "124", likes: 1 },
  { title: "123", start: "123", finish: "123", note: "123", likes: 0 },
  { title: "Arbat", start: "arbat", finish: "balashikha", note: "bad road", likes: 2 },
];

const Thumb = () => (
  <svg viewBox="0 0 42 42" className="mt-[10px] size-[42px] shrink-0">
    <circle cx="21" cy="21" r="21" fill="#5b8be4" />
    <g fill="#fff">
      <rect x="10" y="18.500" width="6" height="12.500" rx="1.200" />
      <path d="M17.500 19Q21 15 21.500 12 21.500 8 23.500 8 26 8.500 25.500 13L24.800 16.500H30Q32 17 31.500 19 32.500 21 31 22.500 32 24.500 30.500 25.800 31 28.500 28.500 29H19.500Q17.500 29 17.500 27z" />
    </g>
  </svg>
);

export default function App() {
  return (
    <div className="h-[1800px] w-[2880px] overflow-hidden bg-[#f0f0f0] font-['Inter',sans-serif]">
      <TabStrip />
      <Toolbar />
      <Header />
      <main className="flex justify-between px-[144px]">
        <section className="relative mt-[192px] size-[1200px] overflow-hidden">
          <MapArt />
          <MapControls />
        </section>
        <section className="mt-[96px] w-[1272px]">
          <label className="mb-[4px] flex h-12 items-center gap-4 text-[32px] tracking-[-0.019em] text-[#212529]">
            <span className="size-8 rounded-[8px] border-2 border-[#bfbfbf] bg-white" />
            <span className="mt-[2px]">Sort routes by rating</span>
          </label>
          <ul className="border-x-2 border-[#dfdfdf] bg-white">
            {ROUTES.map((r, i) => (
              <li key={i} className="flex h-[280.500px] border-t-2 border-[#dfdfdf] pt-[33px] pr-[32px] pl-[43px] text-[32px] leading-[48px] text-[#595c5f]">
                <Thumb />
                <div className="ml-[43px]">
                  <h6 className="leading-[38.400px] font-semibold tracking-[-0.013em] text-[#212529]">{r.title}</h6>
                  <p className="tracking-[-0.020em]">
                    <span className="mr-[60px]">Start: {r.start}</span>
                    <span>Finish: {r.finish}</span>
                  </p>
                  <p className={/\d/.test(r.note) ? "tracking-[-0.003em]" : "tracking-[-0.022em]"}>{r.note}</p>
                  <a className="tracking-[-0.025em] text-[#2f6bf0] underline decoration-[3px] underline-offset-[3px]">See more</a>
                </div>
                <span className="ml-auto text-[28px] leading-[41px] tracking-[-0.006em] text-[#929395]">{r.likes} likes</span>
              </li>
            ))}
          </ul>
        </section>
      </main>
    </div>
  );
}
